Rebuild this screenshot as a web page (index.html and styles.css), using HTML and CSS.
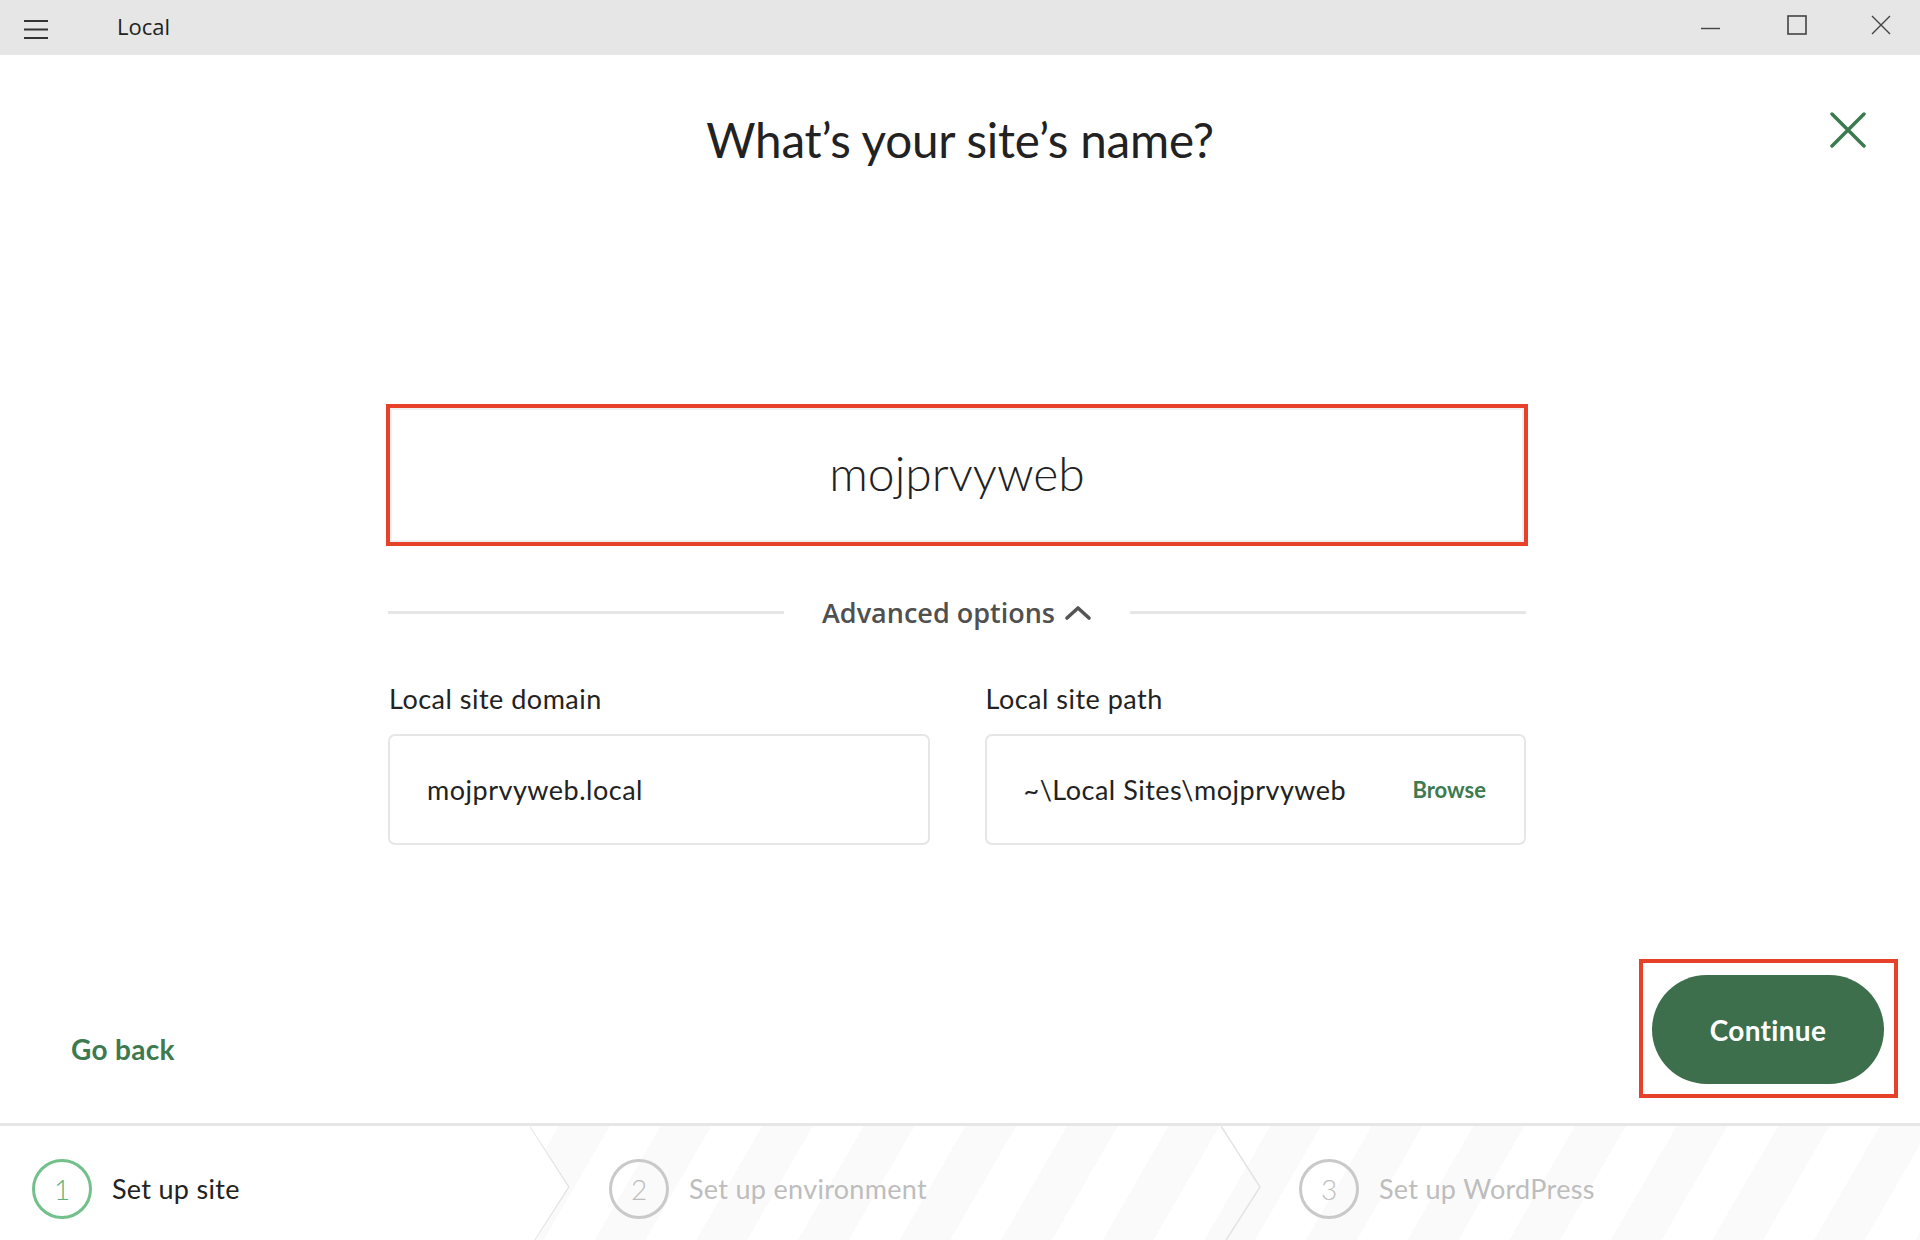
FILE: index.html
```html
<!DOCTYPE html>
<html lang="en">
<head>
    <meta charset="UTF-8">
    <meta name="viewport" content="width=device-width, initial-scale=1.0">
    <title>Local</title>
    <link rel="stylesheet" href="styles.css">
</head>
<body>
    <!-- Window title bar -->
    <header class="titlebar">
        <div class="titlebar-left">
            <svg class="menu-icon" width="24" height="20" viewBox="0 0 24 20">
                <path d="M0 2h24M0 10.5h24M0 19h24" stroke="#333" stroke-width="2" fill="none"/>
            </svg>
            <span class="app-name">Local</span>
        </div>
        <div class="window-controls">
            <div class="win-btn">
                <svg width="20" height="20" viewBox="0 0 20 20"><path d="M1 13.5h19" stroke="#444" stroke-width="1.4"/></svg>
            </div>
            <div class="win-btn win-max">
                <svg width="20" height="20" viewBox="0 0 20 20"><rect x="1" y="1" width="18" height="18" stroke="#444" stroke-width="1.6" fill="none"/></svg>
            </div>
            <div class="win-btn">
                <svg width="20" height="20" viewBox="0 0 20 20"><path d="M1 1l18 18M19 1L1 19" stroke="#444" stroke-width="1.4"/></svg>
            </div>
        </div>
    </header>

    <main class="main">
        <svg class="close-modal" width="36" height="36" viewBox="0 0 36 36">
            <path d="M2 2l32 32M34 2L2 34" stroke="#3b7a4f" stroke-width="3.5" stroke-linecap="round"/>
        </svg>

        <h1 class="page-title">What’s your site’s name?</h1>

        <div class="form">
            <div class="highlight name-highlight">
                <div class="name-input">mojprvyweb</div>
            </div>

            <div class="advanced">
                <span class="advanced-line"></span>
                <span class="advanced-label">
                    Advanced options
                    <svg width="28" height="17" viewBox="0 0 28 17"><path d="M3 14L14 4l11 10" stroke="#555" stroke-width="3.6" fill="none" stroke-linecap="round" stroke-linejoin="round"/></svg>
                </span>
                <span class="advanced-line"></span>
            </div>

            <div class="fields">
                <div class="field">
                    <label class="field-label">Local site domain</label>
                    <div class="field-input">mojprvyweb.local</div>
                </div>
                <div class="field">
                    <label class="field-label">Local site path</label>
                    <div class="field-input">
                        <span>~\Local Sites\mojprvyweb</span>
                        <span class="browse">Browse</span>
                    </div>
                </div>
            </div>
        </div>

        <div class="actions">
            <a class="go-back" href="#">Go back</a>
            <div class="highlight continue-highlight">
                <button class="continue">Continue</button>
            </div>
        </div>
    </main>

    <!-- Step indicator -->
    <footer class="steps">
        <div class="step step-active">
            <span class="step-num">1</span>
            <span class="step-text">Set up site</span>
            <svg class="chevron" width="40" height="122" viewBox="0 0 40 122"><polyline points="0,0 39,61 0,122" stroke="#e3e3e3" stroke-width="1.5" fill="none"/></svg>
        </div>
        <div class="step">
            <span class="step-num">2</span>
            <span class="step-text">Set up environment</span>
            <svg class="chevron" width="40" height="122" viewBox="0 0 40 122"><polyline points="0,0 39,61 0,122" stroke="#e3e3e3" stroke-width="1.5" fill="none"/></svg>
        </div>
        <div class="step">
            <span class="step-num">3</span>
            <span class="step-text">Set up WordPress</span>
        </div>
    </footer>
</body>
</html>
```

FILE: styles.css
```css
* {
    margin: 0;
    padding: 0;
    box-sizing: border-box;
}

body {
    width: 1920px;
    height: 1240px;
    overflow: hidden;
    display: flex;
    flex-direction: column;
    background: #ffffff;
    font-family: 'Lato', 'Open Sans', sans-serif;
    color: #222;
}

/* title bar */
.titlebar {
    height: 55px;
    flex-shrink: 0;
    background: #e6e6e6;
    display: flex;
    justify-content: space-between;
    align-items: center;
}

.titlebar-left {
    display: flex;
    align-items: center;
    padding-left: 24px;
}

.menu-icon {
    display: block;
    margin-top: 2px;
}

.app-name {
    font-family: 'Open Sans', 'Noto Sans', sans-serif;
    font-size: 22px;
    color: #222;
    margin-left: 69px;
    margin-bottom: 3px;
}

.window-controls {
    display: flex;
    height: 100%;
    padding-bottom: 5px;
}

.win-btn {
    width: 84px;
    height: 100%;
    display: flex;
    align-items: center;
    justify-content: center;
}

.win-max {
    padding-left: 5px;
}

.win-btn:last-child {
    justify-content: flex-end;
    padding-right: 29px;
}

/* main area */
.main {
    flex: 1;
    position: relative;
    display: flex;
    flex-direction: column;
    align-items: center;
}

.close-modal {
    position: absolute;
    top: 57px;
    right: 54px;
}

.page-title {
    margin-top: 56px;
    font-size: 47.6px;
    font-weight: 400;
    line-height: 58px;
    color: #222;
    letter-spacing: -0.2px;
}

.form {
    width: 1142px;
    margin-top: 235px;
    margin-right: 6px;
}

.highlight {
    border: 4px solid #e8412a;
}

.name-input {
    height: 134px;
    border: 2px solid #f0f0f0;
    display: flex;
    align-items: center;
    justify-content: center;
    font-size: 48px;
    font-weight: 300;
    color: #222;
    padding-bottom: 5px;
}

.advanced {
    display: flex;
    align-items: center;
    gap: 38px;
    margin-top: 48px;
    height: 36px;
    padding: 0 2px;
}

.advanced-line {
    flex: 1;
    height: 3px;
    background: #e6e6e6;
}

.advanced-label {
    display: flex;
    align-items: center;
    gap: 9px;
    font-family: 'Open Sans', sans-serif;
    font-weight: 600;
    font-size: 27px;
    color: #505050;
}

.fields {
    display: flex;
    gap: 55px;
    margin-top: 53px;
    padding: 0 2px;
}

.field {
    flex: 1;
}

.field-label {
    display: block;
    font-size: 27px;
    letter-spacing: 0.5px;
    line-height: 32px;
    color: #222;
    margin-bottom: 19px;
    padding-left: 1px;
}

.field-input {
    height: 111px;
    border: 2px solid #e6e6e6;
    border-radius: 7px;
    display: flex;
    align-items: center;
    justify-content: space-between;
    padding: 0 38px 0 37px;
    font-size: 27px;
    letter-spacing: 0.5px;
    color: #222;
}

.browse {
    font-size: 22px;
    font-weight: 700;
    letter-spacing: 0;
    color: #3d7a50;
}

.actions {
    margin-top: auto;
    width: 100%;
    display: flex;
    justify-content: space-between;
    align-items: flex-end;
    padding: 0 22px 25px 71px;
}

.go-back {
    font-size: 28px;
    font-weight: 700;
    letter-spacing: 0.3px;
    color: #3d7a50;
    text-decoration: none;
    line-height: 32px;
    margin-bottom: 33px;
}

.continue-highlight {
    padding: 12px 10px 10px 9px;
}

.continue {
    display: block;
    width: 232px;
    height: 109px;
    border: none;
    border-radius: 55px;
    background: #3e6f4c;
    color: #ffffff;
    font-family: 'Lato', sans-serif;
    font-size: 28px;
    font-weight: 700;
    letter-spacing: 0.3px;
}

/* step footer */
.steps {
    height: 117px;
    flex-shrink: 0;
    border-top: 3px solid #e6e6e6;
    display: grid;
    grid-template-columns: 530px 691px 1fr;
    background: repeating-linear-gradient(120deg, #ffffff 0 44px, #fafafa 44px 88px);
    overflow: hidden;
}

.step {
    position: relative;
    display: flex;
    align-items: center;
    gap: 20px;
    padding: 0 0 0 79px;
    color: #bdbdbd;
}

.step-active {
    padding-left: 32px;
    background: #ffffff;
    z-index: 2;
}

.step + .step {
    padding-left: 79px;
}

.step:last-child {
    padding-left: 78px;
}

.step-num {
    width: 60px;
    height: 60px;
    flex-shrink: 0;
    border: 3px solid #c9c9c9;
    border-radius: 50%;
    display: flex;
    align-items: center;
    justify-content: center;
    font-size: 28px;
    font-weight: 300;
    color: #bdbdbd;
    margin-top: 12px;
}

.step-text {
    font-size: 27px;
    letter-spacing: 0.3px;
    margin-top: 10px;
}

.step-active .step-num {
    border-color: #72c08a;
    color: #5bb277;
}

.step-active .step-text {
    color: #222;
}

.chevron {
    position: absolute;
    top: 0;
    left: 100%;
}

.step-active .chevron {
    background: #ffffff;
    clip-path: polygon(0 0, 100% 50%, 0 100%);
}
```
